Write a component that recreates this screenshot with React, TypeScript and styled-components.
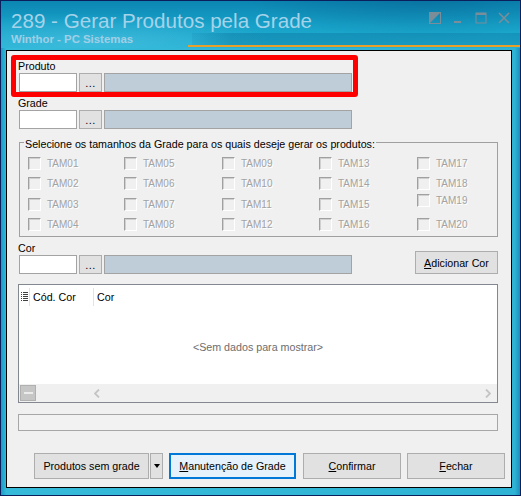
import React from 'react';
import styled, { createGlobalStyle } from 'styled-components';

const UI_FONT = `"Liberation Sans", Arial, sans-serif`;

const GlobalStyle = createGlobalStyle`
  html, body { margin: 0; padding: 0; background: #0a1f5c; }
  body { font-family: ${UI_FONT}; }
  #root { width: 521px; height: 496px; }
`;

/* ---------- window frame ---------- */

const Window = styled.div`
  width: 521px;
  height: 496px;
  box-sizing: border-box;
  border: 1px solid #0a1f5c;
  display: flex;
  flex-direction: column;
  background: linear-gradient(90deg, #1a9cc6 0%, #35bad9 1%, #2fb3d4 99%, #1a8fbf 100%);
`;

const TitleBar = styled.header`
  flex: none;
  height: 47px;
  box-sizing: border-box;
  padding: 8px 10px 0 10px;
  display: flex;
  justify-content: space-between;
  align-items: flex-start;
  background:
    linear-gradient(#e9a02a, #e9a02a) 187px 44px / calc(100% - 187px) 2px no-repeat,
    linear-gradient(90deg, rgba(6, 104, 146, 0.1), rgba(6, 104, 146, 0.35) 12%, rgba(6, 104, 146, 0.28))
      191px 32px / calc(100% - 191px) 12px no-repeat,
    radial-gradient(ellipse 260px 40px at 90px 40px, rgba(120, 215, 240, 0.35), rgba(120, 215, 240, 0) 70%),
    radial-gradient(ellipse 220px 60px at 420px -10px, rgba(0, 70, 120, 0.35), rgba(0, 70, 120, 0) 80%),
    linear-gradient(180deg, #0c86b2 0%, #16a0c7 50%, #22b0d3 100%);
`;

const TitleText = styled.div`
  display: flex;
  flex-direction: column;
`;

const Title = styled.div`
  font-family: ${UI_FONT};
  font-size: 20.6px;
  line-height: 23px;
  color: #a5d3ea;
  white-space: nowrap;
`;

const Subtitle = styled.div`
  font-family: ${UI_FONT};
  font-size: 11.4px;
  font-weight: bold;
  line-height: 13px;
  margin-top: 1px;
  color: #a0cfe6;
  white-space: nowrap;
`;

const Controls = styled.div`
  display: flex;
  gap: 11px;
  padding-top: 3px;
`;

const ControlIcon = styled.svg`
  width: 12px;
  height: 12px;
  display: block;
`;

const Client = styled.main`
  flex: 1;
  margin: 2px 8px 7px 5px;
  border: 1px solid #000;
  background: #f0f0f0;
  padding: 4px 13px 0 11px;
  display: flex;
  flex-direction: column;
  position: relative;
  font-family: ${UI_FONT};
  font-size: 10.7px;
  color: #000;
`;

/* red marker drawn over the Produto field */
const Highlight = styled.div`
  position: absolute;
  left: 4px;
  top: 4px;
  width: 347px;
  height: 42px;
  box-sizing: border-box;
  border: 5px solid #ff0000;
  border-radius: 3px;
  pointer-events: none;
`;

/* ---------- lookup fields ---------- */

const FieldBox = styled.div`
  display: flex;
  flex-direction: column;
`;

const Label = styled.div`
  height: 18px;
  box-sizing: border-box;
  padding-top: 4px;
  line-height: 14px;
  white-space: nowrap;
`;

const FieldRow = styled.div`
  display: flex;
  gap: 2px;
  padding-left: 1px;
`;

const Input = styled.div`
  width: 58px;
  height: 19px;
  box-sizing: border-box;
  background: #fff;
  border: 1px solid #a3a3a3;
`;

const Ellipsis = styled.div`
  width: 23px;
  height: 19px;
  box-sizing: border-box;
  background: #e1e1e1;
  border: 1px solid #adadad;
  display: flex;
  align-items: center;
  justify-content: center;
  font-size: 11px;
  letter-spacing: 0.5px;
  line-height: 1;
  padding-top: 2px;
`;

const Description = styled.div`
  width: 248px;
  height: 19px;
  box-sizing: border-box;
  background: #bfcdd9;
  border: 1px solid #a3a3a3;
`;

const Lookup: React.FC<{ label: string }> = ({ label }) => (
  <FieldBox>
    <Label>{label}</Label>
    <FieldRow>
      <Input />
      <Ellipsis>...</Ellipsis>
      <Description />
    </FieldRow>
  </FieldBox>
);

/* ---------- size group ---------- */

const Group = styled.fieldset`
  margin: 4px 0 0 1px;
  padding: 2px 0 2px 8px;
  border: 1px solid #a0a0a0;
  min-width: 0;
`;

const Legend = styled.legend`
  padding: 4px 1px 0 1px;
  margin-left: -4px;
  line-height: 14px;
  font-size: 10.7px;
  white-space: nowrap;
`;

const CheckGrid = styled.div`
  display: grid;
  grid-template-columns: 96px 98px 97px 98px 1fr;
  grid-template-rows: 20px 21px 20px 20px;
  grid-auto-flow: column;
`;

const CheckItem = styled.label<{ $lift?: boolean }>`
  display: flex;
  align-items: center;
  gap: 6px;
  align-self: center;
  margin-bottom: ${(p) => (p.$lift ? '8px' : '0')};
  font-size: 10px;
  color: #a2a2a2;
  text-shadow: 1px 1px 0 #ffffff;
  white-space: nowrap;
`;

const CheckBox = styled.span`
  width: 13px;
  height: 13px;
  box-sizing: border-box;
  flex: none;
  border-style: solid;
  border-width: 1px;
  border-color: #a0a0a0 #ffffff #ffffff #a0a0a0;
  box-shadow: inset 1px 1px 0 #d0d0d0;
  background: #f0f0f0;
`;

/* ---------- colour row ---------- */

const CorRow = styled.div`
  display: flex;
  justify-content: space-between;
  align-items: flex-end;
`;

const Button = styled.button<{ $w: number; $h?: number; $focused?: boolean }>`
  width: ${(p) => p.$w}px;
  height: ${(p) => p.$h ?? 26}px;
  box-sizing: border-box;
  flex: none;
  margin: 0;
  padding: 0;
  background: ${(p) => (p.$focused ? '#e5f1fb' : '#e1e1e1')};
  border: ${(p) => (p.$focused ? '2px solid #0078d7' : '1px solid #adadad')};
  font-family: ${UI_FONT};
  font-size: 10.7px;
  color: #000;
  white-space: nowrap;
  u { text-decoration: underline; text-underline-offset: 1px; }
`;

/* ---------- data grid ---------- */

const Grid = styled.section`
  margin-top: 10px;
  height: 119px;
  box-sizing: border-box;
  border: 1px solid #828790;
  background: #fff;
  display: flex;
  flex-direction: column;
`;

const HeaderRow = styled.div`
  height: 21px;
  display: flex;
  align-items: center;
  padding-top: 1px;
`;

const HeaderCell = styled.div<{ $w?: number }>`
  ${(p) => (p.$w ? `width: ${p.$w}px;` : 'flex: 1;')}
  box-sizing: border-box;
  height: 18px;
  display: flex;
  align-items: center;
  padding-left: 3px;
  border-right: 1px solid #e3e3e3;
  &:last-child { border-right: none; }
`;

const IndicatorCell = styled.div`
  width: 11px;
  height: 18px;
  box-sizing: border-box;
  border-right: 1px solid #e3e3e3;
  display: flex;
  align-items: center;
  justify-content: center;
`;

const EmptyBody = styled.div`
  flex: 1;
  display: flex;
  align-items: center;
  justify-content: center;
  color: #6d6d6d;
  padding-top: 2px;
`;

const GridFooter = styled.div`
  height: 18px;
  display: flex;
  background: #f0f0f0;
`;

const FilterPanel = styled.div`
  width: 68px;
  padding: 0 0 1px 1px;
  display: flex;
  align-items: center;
`;

const CollapseButton = styled.div`
  width: 16px;
  height: 16px;
  box-sizing: border-box;
  background: #c6c6c6;
  border: 1px solid #b0b0b0;
  display: flex;
  align-items: center;
  justify-content: center;
  &::after {
    content: '';
    width: 9px;
    height: 2px;
    background: #ececec;
  }
`;

const HScroll = styled.div`
  flex: 1;
  display: flex;
  align-items: center;
  justify-content: space-between;
  padding: 0 6px 0 6px;
`;

const Progress = styled.div`
  margin-top: 11px;
  height: 17px;
  box-sizing: border-box;
  border: 1px solid #a7a7a7;
  background: #f2f2f2;
`;

const ButtonBar = styled.div`
  margin: 22px -7px 0 16px;
  display: flex;
  align-items: center;
`;

const SplitButton = styled.div`
  display: flex;
  gap: 1px;
  margin-right: 6px;
`;

const DropArrow = styled.button`
  width: 13px;
  height: 26px;
  box-sizing: border-box;
  margin: 0;
  padding: 0;
  background: #e1e1e1;
  border: 1px solid #adadad;
  display: flex;
  align-items: center;
  justify-content: center;
  &::after {
    content: '';
    border-left: 3.5px solid transparent;
    border-right: 3.5px solid transparent;
    border-top: 4px solid #000;
  }
`;

const ButtonGap = styled.div<{ $w: number }>`
  width: ${(p) => p.$w}px;
  flex: none;
`;

const sizes = Array.from({ length: 20 }, (_, i) => `TAM${String(i + 1).padStart(2, '0')}`);

const Chevron: React.FC<{ dir: 'left' | 'right' }> = ({ dir }) => (
  <svg width="6" height="9" viewBox="0 0 6 9">
    <path
      d={dir === 'left' ? 'M5 0.5 L1 4.5 L5 8.5' : 'M1 0.5 L5 4.5 L1 8.5'}
      fill="none"
      stroke="#c4c4c4"
      strokeWidth="1.8"
    />
  </svg>
);

export default function App() {
  return (
    <>
      <GlobalStyle />
      <Window>
        <TitleBar>
          <TitleText>
            <Title>289 - Gerar Produtos pela Grade</Title>
            <Subtitle>Winthor - PC Sistemas</Subtitle>
          </TitleText>
          <Controls>
            <ControlIcon viewBox="0 0 12 12">
              <rect x="0.5" y="0.5" width="11" height="11" fill="none" stroke="#7b8d99" />
              <path d="M0.5 0.5 H11.5 L0.5 11.5 Z" fill="#7b8d99" />
            </ControlIcon>
            <ControlIcon viewBox="0 0 12 12">
              <rect x="2" y="9" width="7" height="2" fill="#7b8d99" />
            </ControlIcon>
            <ControlIcon viewBox="0 0 12 12">
              <rect x="1" y="1" width="10" height="10" fill="none" stroke="#7b8d99" />
              <rect x="1" y="1" width="10" height="2" fill="#7b8d99" />
            </ControlIcon>
            <ControlIcon viewBox="0 0 12 12">
              <path d="M1 1 L11 11 M11 1 L1 11" stroke="#7b8d99" strokeWidth="1.6" />
            </ControlIcon>
          </Controls>
        </TitleBar>

        <Client>
          <Highlight />
          <Lookup label="Produto" />
          <Lookup label="Grade" />

          <Group>
            <Legend>Selecione os tamanhos da Grade para os quais deseje gerar os produtos:</Legend>
            <CheckGrid>
              {sizes.map((s) => (
                <CheckItem key={s} $lift={s === 'TAM19'}>
                  <CheckBox />
                  {s}
                </CheckItem>
              ))}
            </CheckGrid>
          </Group>

          <CorRow>
            <Lookup label="Cor" />
            <Button $w={83} $h={23}>
              <u>A</u>dicionar Cor
            </Button>
          </CorRow>

          <Grid>
            <HeaderRow>
              <IndicatorCell>
                <svg width="7" height="10" viewBox="0 0 7 10">
                  {[0, 2, 4, 6, 8].map((y) => (
                    <g key={y}>
                      <rect x="0" y={y} width="1" height="1" fill="#404040" />
                      <rect x="2" y={y} width="5" height="1" fill="#404040" />
                    </g>
                  ))}
                </svg>
              </IndicatorCell>
              <HeaderCell $w={64}>Cód. Cor</HeaderCell>
              <HeaderCell>Cor</HeaderCell>
            </HeaderRow>
            <EmptyBody>&lt;Sem dados para mostrar&gt;</EmptyBody>
            <GridFooter>
              <FilterPanel>
                <CollapseButton />
              </FilterPanel>
              <HScroll>
                <Chevron dir="left" />
                <Chevron dir="right" />
              </HScroll>
            </GridFooter>
          </Grid>

          <Progress />

          <ButtonBar>
            <SplitButton>
              <Button $w={115}>Produtos sem grade</Button>
              <DropArrow />
            </SplitButton>
            <Button $w={127} $focused>
              <u>M</u>anutenção de Grade
            </Button>
            <ButtonGap $w={7} />
            <Button $w={98}>
              <u>C</u>onfirmar
            </Button>
            <ButtonGap $w={6} />
            <Button $w={98}>
              <u>F</u>echar
            </Button>
          </ButtonBar>
        </Client>
      </Window>
    </>
  );
}
